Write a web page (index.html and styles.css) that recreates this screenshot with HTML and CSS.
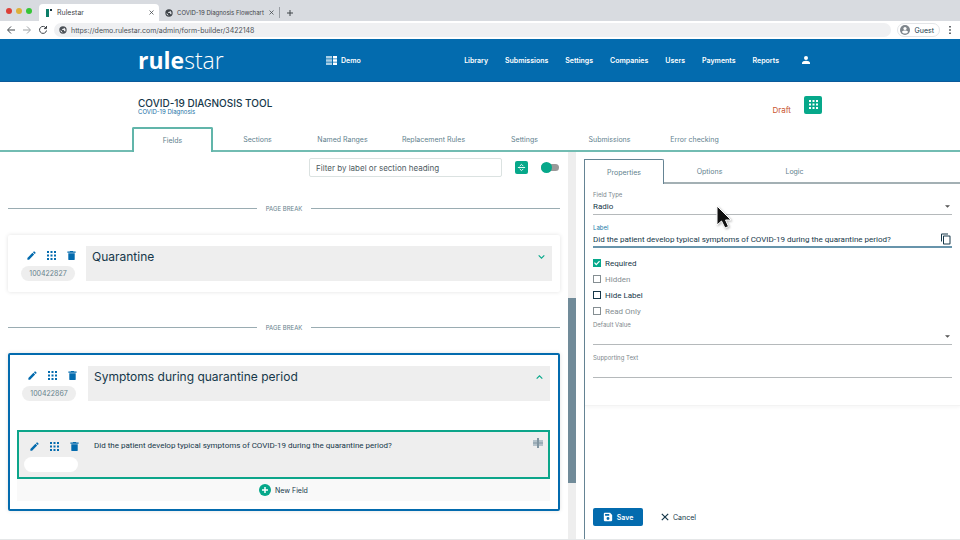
FILE: index.html
```
<!DOCTYPE html>
<html lang="en">
<head>
    <meta charset="UTF-8">
    <meta name="viewport" content="width=device-width, initial-scale=1.0">
    <title>Rulestar</title>
    <link rel="stylesheet" href="styles.css">
</head>
<body>
    <svg class="sprite" aria-hidden="true">
        <symbol id="pencil" viewBox="0 0 24 24"><path d="M3 17.25V21h3.75L17.8 9.94l-3.75-3.75L3 17.25zM20.7 7.04a1 1 0 0 0 0-1.41l-2.34-2.34a1 1 0 0 0-1.41 0l-1.83 1.83 3.75 3.75 1.83-1.83z"/></symbol>
        <symbol id="grid" viewBox="0 0 9 9"><path d="M0 0h2v2H0zM3.5 0h2v2h-2zM7 0h2v2H7zM0 3.5h2v2H0zM3.5 3.5h2v2h-2zM7 3.5h2v2H7zM0 7h2v2H0zM3.5 7h2v2h-2zM7 7h2v2H7z"/></symbol>
        <symbol id="trash" viewBox="0 0 24 24"><path d="M5 8v12a2 2 0 0 0 2 2h10a2 2 0 0 0 2-2V7H5zM21 3h-5l-1-1H9L8 3H3v3h18z"/></symbol>
        <symbol id="globe" viewBox="0 0 24 24"><path d="M12 1a11 11 0 1 0 0 22 11 11 0 0 0 0-22zM4 12l5 4v1c0 1 1 2 2 2v1A8 8 0 0 1 4 12zm14 5c0-1-1-2-2-2h-1v-3H9v-2h2V8h2c1 0 2-1 2-2V5a8 8 0 0 1 3 12z"/></symbol>
        <symbol id="close" viewBox="0 0 10 10"><path d="M1 1l8 8M9 1L1 9"/></symbol>
        <symbol id="caret" viewBox="0 0 6 3"><path d="M0 0h6L3 3z"/></symbol>
    </svg>

    <!-- Browser window -->
    <div class="browser-tabs">
        <div class="lights"><i class="red"></i><i class="yellow"></i><i class="green"></i></div>
        <div class="browser-tab active">
            <svg class="favicon" viewBox="0 0 8 8"><path fill="#0b7d68" d="M1 0h3v8H1z"/><path fill="#16323d" d="M5 0h2v2H5z"/></svg>
            <span>Rulestar</span>
            <button class="tab-close" aria-label="Close tab"><svg class="line-icon"><use href="#close"/></svg></button>
        </div>
        <div class="browser-tab">
            <svg class="favicon"><use href="#globe"/></svg>
            <span class="long">COVID-19 Diagnosis Flowchart</span>
            <button class="tab-close" aria-label="Close tab"><svg class="line-icon"><use href="#close"/></svg></button>
        </div>
        <button class="new-tab" aria-label="New tab"><svg viewBox="0 0 8 8"><path d="M4 1v6M1 4h6"/></svg></button>
    </div>
    <div class="toolbar">
        <button aria-label="Back"><svg viewBox="0 0 10 10"><path d="M9 5H2M5 1.5L1.5 5 5 8.5"/></svg></button>
        <button class="off" aria-label="Forward"><svg viewBox="0 0 10 10"><path d="M1 5h7M5 1.5L8.5 5 5 8.5"/></svg></button>
        <button aria-label="Reload"><svg viewBox="0 0 10 10"><path d="M8 3a3.5 3.5 0 1 0 .5 2.5M8.5 1v2.600H6"/></svg></button>
        <label class="address">
            <svg><use href="#globe"/></svg>
            <input type="text" aria-label="Address" value="https://demo.rulestar.com/admin/form-builder/3422148">
        </label>
        <button class="guest">
            <svg viewBox="0 0 10 10"><circle cx="5" cy="5" r="5" fill="#7f868c"/><circle cx="5" cy="3.5" r="1.6" fill="#fff"/><path fill="#fff" d="M2 7c0-2 6-2 6 0-1 2-5 2-6 0z"/></svg>
            Guest
        </button>
        <button class="dots" aria-label="Menu"><svg viewBox="0 0 10 10"><path d="M4 0h2v2H4zM4 4h2v2H4zM4 8h2v2H4z"/></svg></button>
    </div>

    <!-- Site header -->
    <header class="site-header">
        <div class="container">
            <a href="#" class="logo"><b>rule</b>star</a>
            <a href="#" class="demo">
                <svg viewBox="0 0 11 9"><path fill="#a9cfe6" d="M0 0h6v2.500H0zM0 3.250h6v2.500H0zM0 6.500h6V9H0z"/><path fill="#fff" d="M7 0h4v2.500H7zM7 3.250h4v2.500H7zM7 6.500h4V9H7z"/></svg>
                Demo
            </a>
            <nav class="main-nav">
                <a href="#">Library</a>
                <a href="#">Submissions</a>
                <a href="#">Settings</a>
                <a href="#">Companies</a>
                <a href="#">Users</a>
                <a href="#">Payments</a>
                <a href="#">Reports</a>
                <a href="#" class="user" aria-label="Account"><svg viewBox="0 0 8 8"><circle cx="4" cy="2" r="2"/><path d="M0 8V7c0-3 8-3 8 0v1z"/></svg></a>
            </nav>
        </div>
    </header>

    <div class="form-head container">
        <div class="title">
            <h1>COVID-19 DIAGNOSIS TOOL</h1>
            <a href="#">COVID-19 Diagnosis</a>
        </div>
        <span class="status">Draft</span>
        <button class="apps" aria-label="Apps"><svg><use href="#grid"/></svg></button>
    </div>

    <nav class="tabs">
        <a href="#" class="active">Fields</a>
        <a href="#">Sections</a>
        <a href="#">Named Ranges</a>
        <a href="#" class="wide">Replacement Rules</a>
        <a href="#">Settings</a>
        <a href="#">Submissions</a>
        <a href="#">Error checking</a>
    </nav>

    <main class="builder">
        <section class="fields">
            <div class="filter">
                <input type="text" aria-label="Filter" placeholder="Filter by label or section heading">
                <button class="collapse" aria-label="Collapse all"><svg viewBox="0 0 10 10"><path d="M1 5h8M3 3.5l2-2 2 2M3 6.5l2 2 2-2"/></svg></button>
                <input type="checkbox" class="switch" aria-label="Show hidden">
            </div>

            <div class="page-break">PAGE BREAK</div>

            <article class="card">
                <div class="row">
                    <div class="actions">
                        <button aria-label="Edit"><svg><use href="#pencil"/></svg></button>
                        <button aria-label="Move"><svg><use href="#grid"/></svg></button>
                        <button aria-label="Delete"><svg><use href="#trash"/></svg></button>
                        <span class="pill">100422827</span>
                    </div>
                    <div class="heading">
                        <h2>Quarantine</h2>
                        <button aria-label="Expand"><svg viewBox="0 0 8 8"><path d="M1.5 2.5L4 5l2.5-2.5"/></svg></button>
                    </div>
                </div>
            </article>

            <div class="page-break">PAGE BREAK</div>

            <article class="card selected">
                <div class="row">
                    <div class="actions">
                        <button aria-label="Edit"><svg><use href="#pencil"/></svg></button>
                        <button aria-label="Move"><svg><use href="#grid"/></svg></button>
                        <button aria-label="Delete"><svg><use href="#trash"/></svg></button>
                        <span class="pill">100422867</span>
                    </div>
                    <div class="heading">
                        <h2>Symptoms during quarantine period</h2>
                        <button aria-label="Collapse"><svg viewBox="0 0 8 8"><path d="M1.5 5.5L4 3l2.5 2.5"/></svg></button>
                    </div>
                </div>
                <div class="field">
                    <div class="actions">
                        <button aria-label="Edit"><svg><use href="#pencil"/></svg></button>
                        <button aria-label="Move"><svg><use href="#grid"/></svg></button>
                        <button aria-label="Delete"><svg><use href="#trash"/></svg></button>
                        <span class="pill"></span>
                    </div>
                    <p>Did the patient develop typical symptoms of COVID-19 during the quarantine period?</p>
                    <svg class="split" viewBox="0 0 10 10"><path fill="#b4c2ca" d="M0 2h10v6H0z"/><path fill="#8195a1" d="M4 0h2v10H4zM0 4.5h10v1H0z"/></svg>
                </div>
                <button class="new-field">
                    <svg viewBox="0 0 12 12"><circle cx="6" cy="6" r="6" fill="#06a88a"/><path stroke="#fff" stroke-width="1.500" d="M6 3v6M3 6h6"/></svg>
                    New Field
                </button>
            </article>
        </section>

        <div class="scrollbar"><span class="thumb"></span></div>

        <aside class="panel">
            <nav class="panel-tabs">
                <a href="#" class="active">Properties</a>
                <a href="#">Options</a>
                <a href="#">Logic</a>
            </nav>
            <form class="properties">
                <label for="type">Field Type</label>
                <div class="control">
                    <select id="type"><option>Radio</option></select>
                    <svg class="caret"><use href="#caret"/></svg>
                </div>

                <label for="label" class="focus">Label</label>
                <div class="control focus">
                    <input type="text" id="label" value="Did the patient develop typical symptoms of COVID-19 during the quarantine period?">
                    <button type="button" class="copy" aria-label="Copy"><svg viewBox="0 0 24 24"><path d="M16 1H4a2 2 0 0 0-2 2v14h2V3h12V1zm3 4H8a2 2 0 0 0-2 2v14c0 1.1.9 2 2 2h11a2 2 0 0 0 2-2V7a2 2 0 0 0-2-2zm0 16H8V7h11v14z"/></svg></button>
                </div>

                <div class="checks">
                    <label><input type="checkbox" checked> Required</label>
                    <label class="muted"><input type="checkbox"> Hidden</label>
                    <label><input type="checkbox"> Hide Label</label>
                    <label class="muted"><input type="checkbox"> Read Only</label>
                </div>

                <label for="default">Default Value</label>
                <div class="control">
                    <select id="default"><option></option></select>
                    <svg class="caret"><use href="#caret"/></svg>
                </div>

                <label for="support">Supporting Text</label>
                <div class="control"><input type="text" id="support"></div>
            </form>
            <div class="buttons">
                <button class="save"><svg viewBox="0 0 24 24"><path fill-rule="evenodd" d="M17 2H4a2 2 0 0 0-2 2v16c0 1.1.9 2 2 2h16a2 2 0 0 0 2-2V7zM5 5h10v4H5zM12 12a3.5 3.5 0 1 1 0 7 3.5 3.5 0 0 1 0-7z"/></svg>Save</button>
                <button class="cancel"><svg class="line-icon"><use href="#close"/></svg>Cancel</button>
            </div>
            <svg class="pointer" viewBox="0 0 16 24"><path d="M1 1v19l4.500-4 3.500 7 3.500-1.500L9.500 15H15z"/></svg>
        </aside>
    </main>
</body>
</html>
```
FILE: styles.css
```
* {
    box-sizing: border-box;
}

body {
    display: flex;
    flex-direction: column;
    height: 100vh;
    margin: 0;
    overflow: hidden;
    font-family: Inter, "Liberation Sans", sans-serif;
    font-size: 7px;
    color: #16384a;
    background-color: #fff;
}

a {
    color: inherit;
    text-decoration: none;
}

button {
    display: flex;
    align-items: center;
    justify-content: center;
    padding: 0;
    border: none;
    background: none;
    font: inherit;
    color: inherit;
    cursor: pointer;
}

input,
select {
    margin: 0;
    padding: 0;
    border: none;
    outline: none;
    background: none;
    font: inherit;
    color: inherit;
    appearance: none;
}

svg {
    display: block;
    flex: none;
    width: 10px;
    height: 10px;
    fill: currentColor;
}

.sprite {
    position: absolute;
    width: 0;
    height: 0;
}

.line-icon {
    fill: none;
    stroke: currentColor;
    stroke-width: 1.5;
}

.container {
    display: flex;
    align-items: center;
    width: 100%;
    max-width: 684px;
    margin: 0 auto;
}

/* browser window */
.browser-tabs {
    display: flex;
    align-items: flex-end;
    flex: none;
    height: 21px;
    background-color: #d8dbe0;
    color: #3f4449;
}

.lights {
    display: flex;
    align-self: center;
    gap: 4px;
    width: 39px;
    padding-left: 6px;
}

.lights i {
    width: 6px;
    height: 6px;
    border-radius: 50%;
}

.red { background-color: #dc4038; }
.yellow { background-color: #dcb03a; }
.green { background-color: #35c537; }

.browser-tab {
    display: flex;
    align-items: center;
    gap: 4px;
    width: 120px;
    height: 17px;
    padding: 0 5px 0 6px;
    border-radius: 4px 4px 0 0;
}

.browser-tab.active {
    background-color: #fff;
}

.browser-tab span {
    flex: 1;
    white-space: nowrap;
}

.browser-tab .long {
    font-size: 6px;
}

.browser-tab .favicon {
    width: 8px;
    height: 8px;
}

.tab-close svg {
    width: 5px;
    height: 5px;
}

.new-tab {
    height: 11px;
    margin-bottom: 3px;
    padding-left: 6px;
    border-left: 1px solid #9a9ea4;
}

.new-tab svg,
.toolbar > button svg {
    fill: none;
    stroke: #3f4449;
    stroke-width: 1;
}

.new-tab svg {
    width: 8px;
    height: 8px;
}

.toolbar {
    display: flex;
    align-items: center;
    flex: none;
    gap: 6px;
    height: 18px;
    padding: 0 6px;
}

.toolbar .off {
    opacity: 0.5;
}

.address {
    display: flex;
    align-items: center;
    flex: 1;
    gap: 4px;
    height: 14px;
    padding: 0 5px;
    border-radius: 7px;
    background-color: #eff0f2;
    color: #4c5157;
}

.address svg {
    width: 8px;
    height: 8px;
}

.address input {
    flex: 1;
}

.toolbar .guest {
    gap: 5px;
    height: 14px;
    padding: 0 5px 0 2px;
    border: 1px solid #e3e5e8;
    border-radius: 7px;
}

.toolbar .guest svg {
    stroke: none;
}

.toolbar .dots svg {
    width: 8px;
    height: 8px;
    fill: #3f4449;
    stroke: none;
}

/* site header */
.site-header {
    display: flex;
    flex: none;
    height: 43px;
    border-bottom: 1px solid #0a5a9a;
    background-color: #036bae;
    color: #fff;
    font-weight: 600;
}

.logo {
    width: 188px;
    font-family: "Open Sans", sans-serif;
    font-size: 23px;
    font-weight: 300;
    line-height: 24px;
}

.logo b {
    font-weight: 700;
}

.demo,
.main-nav {
    display: flex;
    align-items: center;
    gap: 4px;
}

.demo svg {
    width: 11px;
    height: 9px;
}

.main-nav {
    gap: 17px;
    margin-left: auto;
    padding-right: 12px;
}

.main-nav .user {
    margin-left: 6px;
}

.user svg {
    width: 8px;
    height: 8px;
}

/* form title */
.form-head {
    flex: none;
    height: 45px;
}

.title {
    padding-top: 3px;
}

.form-head h1 {
    margin: 0;
    font-size: 10px;
    font-weight: 500;
    line-height: 12px;
}

.form-head a {
    display: block;
    color: #1971a5;
    font-size: 6px;
    line-height: 6px;
}

.status {
    margin-left: auto;
    padding-top: 10px;
    color: #c9552f;
    font-size: 8px;
}

.apps {
    width: 18px;
    height: 18px;
    margin-left: 13px;
    border-radius: 2px;
    background-color: #06a88a;
    color: #fff;
}

.apps svg {
    width: 9px;
    height: 9px;
}

/* tabs */
.tabs {
    display: flex;
    flex: none;
    height: 25px;
    padding-left: calc(50% - 348px);
    background: linear-gradient(#72bcb2, #72bcb2) bottom / 100% 2px no-repeat;
    color: #627f8e;
}

.tabs a {
    width: 85px;
    line-height: 26px;
    text-align: center;
}

.tabs .wide {
    width: 97px;
}

.tabs .active {
    width: 81px;
    margin-right: 2px;
    border: 2px solid #61b5aa;
    border-bottom: none;
    border-radius: 2px 2px 0 0;
    background-color: #fff;
    line-height: 23px;
}

/* builder */
.builder {
    display: flex;
    flex: 1;
    min-height: 0;
    border-bottom: 1px solid #e5e7e8;
}

.fields {
    width: calc(60% - 8px);
    padding: 6px 8px 0;
}

.filter {
    display: flex;
    align-items: center;
    justify-content: flex-end;
    gap: 13px;
    padding-right: 1px;
}

.filter input[type="text"] {
    width: 193px;
    height: 19px;
    padding: 0 6px;
    border: 1px solid #dbe2e1;
    border-radius: 2px;
    font-size: 8px;
}

.filter input::placeholder {
    color: #4e5b62;
}

.collapse {
    width: 13px;
    height: 13px;
    border-radius: 2px;
    background-color: #06a88a;
}

.collapse svg {
    width: 9px;
    height: 9px;
    fill: none;
    stroke: #fff;
}

.switch {
    display: flex;
    align-items: center;
    width: 18px;
    height: 7px;
    border-radius: 4px;
    background-color: #999;
}

.switch::before {
    content: "";
    width: 11px;
    height: 11px;
    border-radius: 50%;
    background-color: #06a88a;
}

.page-break {
    display: flex;
    align-items: center;
    gap: 9px;
    height: 8px;
    margin: 27px 0 23px;
    color: #66818c;
    font-size: 6px;
}

.page-break::before,
.page-break::after {
    content: "";
    flex: 1;
    height: 1px;
    background-color: #9aacb2;
}

.card {
    padding: 11px 8px;
    border-radius: 2px;
    box-shadow: 0 0 4px rgba(0, 0, 0, 0.12);
}

.card + .page-break {
    margin: 31px 0 22px;
}

.card.selected {
    padding: 11px 8px 8px 7px;
    border: 2px solid #036bae;
}

.row {
    display: flex;
}

.actions {
    display: grid;
    grid-template-columns: repeat(3, 20px);
    flex: none;
    gap: 4px 0;
    width: 70px;
    padding: 4px 0 0 5px;
    color: #036bae;
}

.selected .row .actions {
    width: 71px;
}

.actions svg {
    width: 11px;
    height: 11px;
}

.actions button:nth-child(2) svg {
    width: 9px;
    height: 9px;
}

.pill {
    grid-column: 1 / -1;
    width: 54px;
    height: 15px;
    border-radius: 8px;
    background-color: #eee;
    color: #66818c;
    line-height: 16px;
    text-align: center;
}

.heading {
    display: flex;
    align-items: flex-start;
    justify-content: space-between;
    flex: 1;
    height: 35px;
    padding: 4px 6px;
    background-color: #eee;
}

.heading h2 {
    margin: 0;
    font-size: 12px;
    font-weight: 400;
    line-height: 14px;
}

.heading svg {
    width: 9px;
    height: 14px;
    fill: none;
    stroke: #06a88a;
}

.field {
    display: flex;
    height: 49px;
    margin-top: 29px;
    padding: 4px 5px;
    border: 2px solid #0ca58a;
    background-color: #eee;
}

.field .actions {
    padding-left: 0;
}

.field .pill {
    background-color: #fff;
}

.field p {
    flex: 1;
    margin: 0;
    padding-top: 5px;
    font-family: Roboto, sans-serif;
    font-size: 8px;
    line-height: 10px;
}

.field .split {
    margin-top: 2px;
}

.new-field {
    gap: 4px;
    width: 100%;
    height: 22px;
    background-color: #f9f9f9;
}

.new-field svg {
    width: 12px;
    height: 12px;
}

.scrollbar {
    flex: none;
    width: 8px;
    padding-top: 146px;
    background-color: #eee;
}

.thumb {
    display: block;
    height: 185px;
    background-color: #718b99;
}

/* properties panel */
.panel {
    position: relative;
    display: flex;
    flex-direction: column;
    flex: 1;
    min-width: 0;
    margin: 7px 0 0 8px;
    border-left: 1px solid #658494;
}

.panel-tabs {
    display: flex;
    flex: none;
    height: 25px;
    background: linear-gradient(#a3b0b4, #a3b0b4) bottom / 100% 2px no-repeat;
    color: #627f8e;
}

.panel-tabs a {
    width: 85px;
    line-height: 26px;
    text-align: center;
}

.panel-tabs .active {
    width: 79px;
    margin-right: 3px;
    border: 1px solid #658494;
    border-left: none;
    border-bottom: none;
    border-radius: 0 2px 0 0;
    background-color: #fff;
}

.properties {
    padding: 7px 8px 18px;
    border-bottom: 1px solid #f3f3f3;
    box-shadow: 0 2px 3px rgba(0, 0, 0, 0.03);
}

.properties > label {
    display: block;
    height: 8px;
    color: #7d878c;
    font-size: 6px;
    line-height: 8px;
}

.properties > .focus {
    color: #1679a8;
}

.control {
    display: flex;
    align-items: center;
    height: 16px;
    margin-bottom: 9px;
    border-bottom: 1px solid #b5b9bb;
    font-family: Roboto, sans-serif;
    font-size: 8px;
}

.properties .control.focus {
    border-bottom: 2px solid #6794ab;
    color: #16384a;
}

.control input,
.control select {
    flex: 1;
    min-width: 0;
}

.caret {
    width: 5px;
    height: 3px;
    margin-right: 2px;
    color: #555;
}

.copy svg {
    width: 12px;
    height: 12px;
}

.checks {
    display: grid;
    gap: 6px;
    padding: 1px 0 5px;
    font-family: Roboto, sans-serif;
    font-size: 8px;
}

.checks label {
    display: flex;
    align-items: center;
    gap: 4px;
    height: 10px;
}

.checks .muted {
    color: #858e92;
}

.checks input {
    width: 8px;
    height: 8px;
    border: 1px solid currentColor;
}

.checks input:checked {
    border-color: #06a88a;
    background-color: #06a88a;
}

.checks input:checked::before {
    content: "";
    display: block;
    width: 6px;
    height: 6px;
    background-color: #fff;
    clip-path: polygon(0 50%, 15% 38%, 38% 62%, 85% 12%, 100% 26%, 38% 90%);
}

.buttons {
    display: flex;
    gap: 18px;
    margin-top: auto;
    padding: 0 8px 13px;
}

.buttons button {
    gap: 4px;
    height: 18px;
}

.buttons .save {
    width: 50px;
    border-radius: 2px;
    background-color: #036bae;
    color: #fff;
    font-weight: 600;
}

.cancel svg {
    width: 8px;
    height: 8px;
}

/* mouse pointer */
.pointer {
    position: absolute;
    top: 46px;
    left: 131px;
    width: 16px;
    height: 24px;
    fill: #111;
    stroke: #fff;
    filter: drop-shadow(1px 1px 1px rgba(0, 0, 0, 0.3));
}
```
